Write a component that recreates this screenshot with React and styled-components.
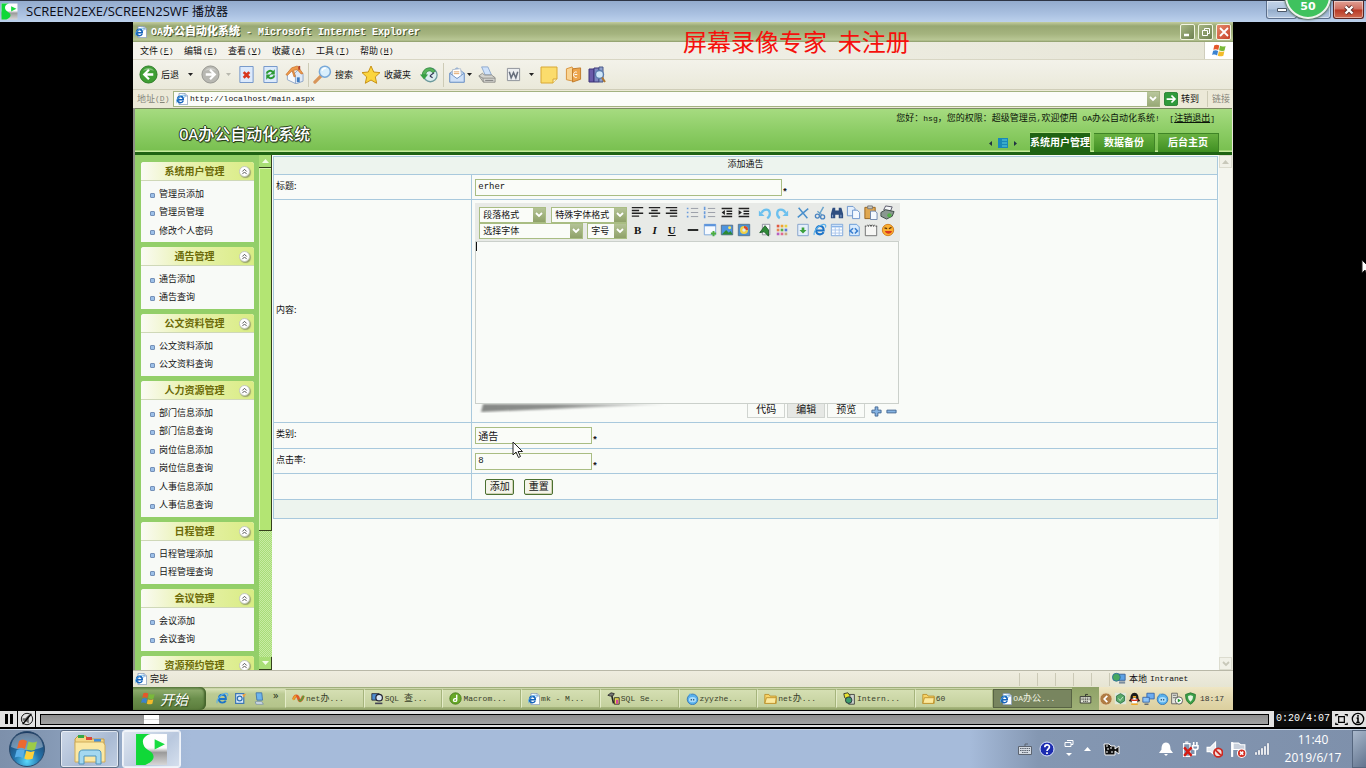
import React from "react";
import styled, { createGlobalStyle, css } from "styled-components";

const cjk = '"Noto Sans CJK SC", sans-serif';
const mono = `"Liberation Mono", ${cjk}`;
const ui = `"Open Sans", ${cjk}`;

const Global = createGlobalStyle`
  *, *::before, *::after { box-sizing: border-box; }
  body { margin: 0; background: #000; font-family: ${cjk}; }
  button, input, select, textarea { font: inherit; color: inherit; margin: 0; padding: 0; border: 0; background: none; border-radius: 0; outline: none; }
  svg { display: block; flex: none; }
`;

/* ---------- player shell ---------- */

const Page = styled.div`
  position: relative;
  display: flex;
  flex-direction: column;
  height: 100vh;
  min-height: 480px;
  overflow: hidden;
`;

const PlayerTitle = styled.header`
  display: flex;
  align-items: center;
  gap: 8px;
  flex: none;
  height: 22px;
  padding: 0 2px 0 1px;
  border-top: 1px solid #2d3444;
  background: linear-gradient(#93abcd, #a9c0e0 60%, #bcd1ec);
  font: 13px/20px ${ui};
  color: #0a0a14;
`;

const PlayerName = styled.span`
  font-size: 12px;
`;

const CaptionButtons = styled.div`
  display: flex;
  gap: 2px;
  align-self: flex-start;
  margin-left: auto;
`;

const CaptionPair = styled.div`
  display: flex;
`;

const Caption = styled.button`
  display: flex;
  align-items: center;
  justify-content: center;
  width: ${(p) => (p.$wide ? "34px" : "31px")};
  height: 18px;
  border: 1px solid ${(p) => (p.$close ? "#5a2420" : "#5c6f8c")};
  border-top: 0;
  border-radius: 0 0 3px 3px;
  background: ${(p) =>
    p.$close
      ? "linear-gradient(#e0a094, #cf6f60 48%, #b83824 52%, #cf6a50)"
      : "linear-gradient(#c3d3e8, #b0c4de 48%, #93abc9 52%, #b4c8e2)"};
  box-shadow: inset 0 0 0 1px rgba(255, 255, 255, 0.45);
`;

const Bubble = styled.button`
  position: absolute;
  z-index: 5;
  top: -27px;
  right: 35px;
  width: 46px;
  height: 46px;
  padding-top: 22px;
  border: 2px solid #eef3ee;
  border-radius: 50%;
  background: #3fc25e;
  box-shadow: 0 0 2px 1px #58705f;
  color: #fff;
  font: bold 11px/18px "DejaVu Sans", sans-serif;
`;

const Stage = styled.div`
  display: flex;
  flex: 1;
  min-height: 0;
  padding: 0 133px;
  background: #000;
`;

const Desktop = styled.div`
  position: relative;
  display: flex;
  flex-direction: column;
  flex: 1;
  min-width: 0;
  background: #ece9d8;
`;

const Watermark = styled.div`
  position: absolute;
  z-index: 3;
  top: 4px;
  left: 50%;
  color: #f5100c;
  font: 24px/30px ${cjk};
  white-space: pre;
`;

/* ---------- browser chrome ---------- */

const BrowserTitle = styled.div`
  display: flex;
  align-items: center;
  gap: 4px;
  flex: none;
  height: 20px;
  padding: 0 2px 0 2px;
  background: linear-gradient(#c3cd9f, #98a873 20%, #a5b47f 60%, #b9c795 90%, #8a9a68);
  color: #fff;
  font: bold 10px/18px ${mono};
  text-shadow: 1px 1px 0 #4c5730;
  white-space: pre;
  b { font-size: 11px; }
`;

const XpButtons = styled.div`
  display: flex;
  gap: 3px;
  margin-left: auto;
`;

const XpButton = styled.button`
  display: flex;
  align-items: center;
  justify-content: center;
  width: 15px;
  height: 16px;
  border: 1px solid #f2f4e2;
  border-radius: 2px;
  background: ${(p) =>
    p.$close ? "linear-gradient(135deg, #e58a6a, #c8432a)" : "linear-gradient(135deg, #a6b583, #6f8150)"};
`;

const MenuBar = styled.nav`
  display: flex;
  flex: none;
  height: 18px;
  padding-left: 7px;
  border-bottom: 1px solid #d8d6c4;
  background: linear-gradient(90deg, #f4f3ec, #f0efe6 50%, #e6e5d6);
`;

const MenuItem = styled.button`
  display: flex;
  align-items: center;
  gap: 1px;
  width: 44px;
  font: 9px/16px ${cjk};
  color: #111;
`;

const Latin = styled.span`
  font: 8px/12px ${mono};
`;

const FlagCell = styled.div`
  display: flex;
  align-items: center;
  justify-content: center;
  width: 29px;
  margin-left: auto;
  border-left: 1px solid #cfcdbc;
  background: #fff;
`;

const Toolbar = styled.div`
  display: flex;
  align-items: center;
  flex: none;
  height: 30px;
  padding-left: 6px;
  border-bottom: 1px solid #cfcdb8;
  background: linear-gradient(#f3f2ea, #eae9da);
`;

const Tool = styled.button`
  display: flex;
  align-items: center;
  gap: 3px;
  margin-right: ${(p) => p.$after || 0}px;
  font: 9px/16px ${cjk};
  color: #111;
  white-space: nowrap;
`;

const Divider = styled.span`
  width: 1px;
  height: 24px;
  margin-right: 4px;
  background: #cdcbb6;
`;

const AddressBar = styled.div`
  display: flex;
  align-items: center;
  flex: none;
  height: 18px;
  padding-left: 4px;
  background: #ece9d8;
  font: 9px/16px ${cjk};
  color: #111;
`;

const AddressLabel = styled.label`
  display: flex;
  align-items: center;
  width: 36px;
  color: #85857a;
`;

const AddressField = styled.div`
  display: flex;
  align-items: center;
  gap: 2px;
  flex: 1;
  height: 16px;
  padding-left: 2px;
  border: 1px solid #a3b281;
  background: #fbfcf9;
`;

const AddressInput = styled.input`
  flex: 1;
  min-width: 0;
  font: 8px/14px ${mono};
`;

const DropButton = styled.button`
  display: flex;
  align-items: center;
  justify-content: center;
  width: 12px;
  height: 14px;
  background: linear-gradient(#b9c79c, #98a976);
`;

const GoButton = styled.button`
  display: flex;
  align-items: center;
  gap: 3px;
  margin: 0 8px 0 4px;
`;

const LinksLabel = styled.a`
  padding: 0 3px 0 4px;
  border-left: 1px solid #cdcbb6;
  color: #85857a;
  text-decoration: none;
`;

/* ---------- application header ---------- */

const AppFrame = styled.div`
  display: flex;
  flex-direction: column;
  flex: 1;
  min-height: 0;
  border-left: 2px solid #8d8f86;
  border-right: 1px solid #e8e6d8;
`;

const AppHeader = styled.header`
  display: flex;
  justify-content: space-between;
  flex: none;
  height: 47px;
  padding: 0 13px 0 44px;
  border-top: 1px solid #7c8a64;
  border-bottom: 3px solid #1f6313;
  background: linear-gradient(#a6db80, #8dcd66 50%, #79c050 96%, #c5ea9c 97%);
`;

const Brand = styled.h1`
  margin: 15px 0 0;
  color: #fff;
  font: 500 16px/24px ${mono};
  text-shadow: 1px 0 0 #28401c, -1px 0 0 #28401c, 0 1px 0 #28401c, 0 -1px 0 #28401c, 1px 1px 1px #28401c;
  white-space: nowrap;
`;

const HeaderRight = styled.div`
  display: flex;
  flex-direction: column;
  align-items: flex-end;
  justify-content: space-between;
`;

const Greeting = styled.div`
  margin: 2px 4px 0 0;
  font: 9px/14px ${cjk};
  color: #0c140a;
  white-space: pre;
  a { color: inherit; }
`;

const Tabs = styled.nav`
  display: flex;
  align-items: flex-end;
  gap: 3px;
`;

const Pager = styled.div`
  display: flex;
  align-items: center;
  gap: 6px;
  margin-right: 10px;
  padding-bottom: 4px;
`;

const Tab = styled.button`
  width: 61px;
  height: ${(p) => (p.$active ? 20 : 19)}px;
  padding-bottom: 2px;
  border: solid ${(p) => (p.$active ? "#a9dc7c" : "#3f8426")};
  border-width: 1px 1px 0 0;
  background: ${(p) => (p.$active ? "#1f6313" : "linear-gradient(#68b040, #3f8f22)")};
  color: #fff;
  font: bold 10px/16px ${cjk};
  white-space: nowrap;
`;

const Body = styled.div`
  display: flex;
  flex: 1;
  min-height: 0;
`;

/* ---------- side menu ---------- */

const Side = styled.aside`
  display: flex;
  flex: none;
  width: 137px;
  background: #93cf69;
`;

const SideMenu = styled.nav`
  display: flex;
  flex-direction: column;
  gap: 5px;
  width: 124px;
  padding: 7px 5px 0 6px;
  overflow: hidden;
`;

const Group = styled.section`
  flex: none;
  border-radius: 3px 3px 0 0;
  background: #f8faf7;
`;

const GroupHead = styled.h2`
  display: flex;
  align-items: center;
  height: 19px;
  margin: 0;
  padding: 0 4px 0 9px;
  border-bottom: 1px solid #cfd8b8;
  border-radius: 3px 3px 0 0;
  background: linear-gradient(90deg, #fafbf4, #e9f2b0 40%, #d9ec84);
  color: #6b6a08;
  font: bold 10px/16px ${cjk};
  span { flex: 1; padding-bottom: 1px; text-align: center; white-space: nowrap; }
`;

const Toggle = styled.button`
  display: flex;
  align-items: center;
  justify-content: center;
  width: 11px;
  height: 11px;
  border: 1px solid #c4c9bd;
  border-radius: 50%;
  background: #fff;
  box-shadow: 1px 1px 1px #9aa56e;
`;

const GroupList = styled.ul`
  margin: 0;
  padding: 4px 0 2px 9px;
  list-style: none;
  li { height: 18px; }
  li:nth-child(even) { margin-bottom: 1px; }
`;

const MenuLink = styled.a`
  display: flex;
  align-items: center;
  gap: 4px;
  color: #141414;
  font: 9px/18px ${cjk};
  text-decoration: none;
  &::before {
    content: "";
    width: 5px;
    height: 5px;
    margin-top: 3px;
    border: 1px solid #7490b8;
    border-radius: 1px;
    background: #9cc0e8;
  }
`;

const Scroll = styled.div`
  display: flex;
  flex-direction: column;
  flex: none;
  width: 13px;
  background: ${(p) =>
    p.$green ? "repeating-conic-gradient(#a8dc78 0 25%, #c8eca4 0 50%) 0 0 / 2px 2px" : "#f4f5ee"};
`;

const ScrollEnd = styled.button`
  display: flex;
  align-items: center;
  justify-content: center;
  height: 13px;
  flex: none;
  border: solid ${(p) => (p.$green ? "#34401c" : "#dcdccf")};
  border-width: ${(p) => (p.$green ? "0 1px 1px 0" : "1px")};
  background: ${(p) => (p.$green ? "#a9de76" : "#f1f1e8")};
`;

const ScrollThumb = styled.div`
  flex: 362;
  border: solid #34401c;
  border-width: 0 1px 1px 0;
  background: #b3e573;
  box-shadow: inset 1px 1px 0 #d8f4b0;
`;

const ScrollRest = styled.div`
  flex: ${(p) => p.$grow || 1};
`;

/* ---------- form ---------- */

const Main = styled.main`
  flex: 1;
  min-width: 0;
  padding: 1px 1px 0 1px;
  overflow: auto;
  background: #f9fbf8;
`;

const FormTable = styled.table`
  width: 100%;
  border-collapse: collapse;
  font: 9px/14px ${cjk};
  color: #141414;
`;

const cell = css`
  padding: 0 3px;
  border: 1px solid #a9c9dd;
  font-weight: normal;
`;

const Banner = styled.th`
  ${cell}
  height: ${(p) => p.$h}px;
  padding-bottom: 3px;
  background: #edf4ee;
  text-align: center;
`;

const LabelCell = styled.th`
  ${cell}
  width: 21%;
  height: ${(p) => p.$h || 25}px;
  padding: 0 2px 3px;
  text-align: left;
`;

const FieldCell = styled.td`
  ${cell}
  vertical-align: ${(p) => (p.$top ? "top" : "middle")};
  padding-top: ${(p) => (p.$top ? 3 : 0)}px;
`;

const FieldLine = styled.div`
  display: flex;
  align-items: flex-end;
  height: 17px;
`;

const Required = styled.span`
  font: bold 9px/6px ${mono};
`;

const TextInput = styled.input`
  width: ${(p) => p.$w}px;
  height: 17px;
  padding: 0 2px 1px;
  border: 1px solid #a9bd83;
  background: #fafcf8;
  font: ${(p) => p.$size || 9}px/14px ${(p) => (p.$sans ? cjk : mono)};
`;

const Actions = styled.div`
  display: flex;
  gap: 10px;
  padding-left: 10px;
`;

const FormButton = styled.button`
  width: 29px;
  height: 16px;
  padding-bottom: 2px;
  border: 1px solid #4b7030;
  border-radius: 2px;
  background: #f4f4ea;
  box-shadow: inset -1px -1px 0 #d0d2b4;
  font: 10px/12px ${cjk};
  white-space: nowrap;
`;

const Editor = styled.div`
  width: 425px;
`;

const EditorBar = styled.div`
  display: flex;
  gap: 1px;
  height: 38px;
  padding: 1px 2px 0 4px;
  background: #e8eae7;
`;

const Selects = styled.div`
  display: flex;
  flex-direction: column;
  width: 149px;
  padding-top: 3px;
`;

const SelectRow = styled.div`
  display: flex;
  justify-content: space-between;
  width: 148px;
`;

const SelectBox = styled.div`
  position: relative;
  width: ${(p) => p.$w}px;
  height: 16px;
  border: 1px solid #a9bd83;
  background: #fafcf8;
`;

const Select = styled.select`
  appearance: none;
  display: block;
  width: 100%;
  height: 14px;
  padding-left: 3px;
  font: 9px/14px ${cjk};
`;

const SelectArrow = styled.span`
  position: absolute;
  top: 0;
  right: 0;
  display: flex;
  align-items: center;
  justify-content: center;
  width: 12px;
  height: 14px;
  background: linear-gradient(#b4c396, #8fa169);
  pointer-events: none;
`;

const IconRows = styled.div`
  display: flex;
  flex-direction: column;
`;

const IconRow = styled.div`
  display: flex;
  gap: 4px;
`;

const IconGroup = styled.div`
  display: flex;
`;

const EditTool = styled.button`
  display: flex;
  align-items: center;
  justify-content: center;
  width: 17px;
  height: 17px;
  color: #111;
`;

const Glyph = styled.span`
  font: ${(p) => (p.$slant ? "italic" : "normal")} bold 11px/16px "Liberation Serif", serif;
  text-decoration: ${(p) => (p.$line ? "underline" : "none")};
`;

const EditArea = styled.textarea`
  display: block;
  width: 424px;
  height: 163px;
  padding: 0 2px;
  border: 1px solid #cbd0cb;
  background: #f9fbf8;
  font: 9px/12px ${mono};
  resize: none;
`;

const AreaWrap = styled.div`
  position: relative;
`;

const Caret = styled.span`
  position: absolute;
  top: 1px;
  left: 1px;
  width: 1px;
  height: 9px;
  background: #111;
`;

const EditorFoot = styled.div`
  display: flex;
  height: 14px;
  padding: 0 3px 0 3px;
`;

const ViewTabs = styled.div`
  display: flex;
  gap: 2px;
  margin: 0 6px 0 auto;
`;

const ViewTab = styled.button`
  width: 38px;
  height: 14px;
  padding-bottom: 3px;
  border: solid #d0d4d0;
  border-width: 0 1px 1px;
  background: ${(p) => (p.$active ? "#e6e8e5" : "#f9fbf8")};
  font: 10px/10px ${cjk};
`;

const ZoomButtons = styled.div`
  display: flex;
  align-items: center;
  gap: 4px;
`;

const Pointer = styled.div`
  position: absolute;
  z-index: 4;
  top: ${(p) => p.$y}px;
  left: ${(p) => p.$x}px;
`;

/* ---------- status bar and XP task bar ---------- */

const StatusBar = styled.footer`
  display: flex;
  align-items: center;
  gap: 3px;
  flex: none;
  height: 17px;
  padding-left: 2px;
  border-top: 1px solid #b9b8a8;
  background: linear-gradient(#eeecdf, #e6e5d3);
  font: 9px/14px ${cjk};
  color: #111;
`;

const Panes = styled.div`
  display: flex;
  margin-left: auto;
`;

const Pane = styled.span`
  display: flex;
  align-items: center;
  gap: 3px;
  width: ${(p) => p.$w || 18}px;
  height: 13px;
  padding-left: 2px;
  border-left: 1px solid #cbc9b6;
  white-space: pre;
`;

const XpBar = styled.div`
  display: flex;
  flex: none;
  height: 23px;
  background: linear-gradient(#8a9c66, #d9e2b8 8%, #bccb94 30%, #b4c48b 85%, #8b9c62);
`;

const StartXp = styled.button`
  display: flex;
  align-items: center;
  gap: 4px;
  width: 73px;
  padding-left: 8px;
  border-radius: 0 6px 6px 0;
  background: linear-gradient(#5d7f41, #8aa869 15%, #6b8f4c 50%, #5b7c3c);
  box-shadow: inset -2px 0 2px #45642c;
  color: #fff;
  font: italic 14px/20px ${cjk};
  text-shadow: 1px 1px 1px #2f4a1d;
`;

const QuickLaunch = styled.div`
  display: flex;
  align-items: center;
  gap: 5px;
  width: 79px;
  padding-left: 10px;
  color: #2a3018;
  font: 11px/12px ${ui};
  span { padding: 0 0 8px 3px; }
`;

const Tasks = styled.div`
  display: flex;
  flex: 1;
  min-width: 0;
`;

const Task = styled.button`
  display: flex;
  align-items: center;
  gap: 1px;
  flex: 1;
  min-width: 0;
  margin: 2px 0;
  padding-left: 6px;
  border: 1px solid ${(p) => (p.$active ? "#586344" : "#a5b47c")};
  border-left-color: ${(p) => (p.$active ? "#586344" : "#e4ecc8")};
  background: ${(p) => (p.$active ? "#78855f" : "linear-gradient(#d5dfb3, #c3d09c)")};
  color: ${(p) => (p.$active ? "#f2f4e4" : "#39412a")};
  font: 8px/14px ${mono};
  white-space: pre;
  overflow: hidden;
  b { font: 9px/14px ${cjk}; }
`;

const Lang = styled.div`
  display: flex;
  align-items: center;
  justify-content: center;
  width: 27px;
  background: linear-gradient(#8fa267, #9fb077);
`;

const TrayXp = styled.div`
  display: flex;
  align-items: center;
  gap: 1px;
  width: 134px;
  background: linear-gradient(#efe6c4, #e2d8ae 50%, #dccf9e);
  color: #333;
`;

const ClockXp = styled.span`
  margin-left: 2px;
  font: 8px/14px ${mono};
`;

/* ---------- player controls ---------- */

const Controls = styled.div`
  display: flex;
  align-items: center;
  gap: 1px;
  flex: none;
  height: 19px;
  padding: 0 0 0 1px;
  border: solid #000;
  border-width: 1px 0 2px;
  background: #e2e2e2;
`;

const ControlButton = styled.button`
  display: flex;
  align-items: center;
  justify-content: center;
  width: ${(p) => (p.$edge ? 17 : 16)}px;
  height: 16px;
  border-right: ${(p) => (p.$edge ? "1px solid #000" : "0")};
`;

const Seek = styled.input`
  appearance: none;
  flex: 1;
  min-width: 0;
  height: 11px;
  margin: 0 4px 0 3px;
  border: 1px solid #000;
  background: linear-gradient(#8c8c8c, #a2a2a2);
  &::-webkit-slider-thumb {
    appearance: none;
    width: 15px;
    height: 9px;
    border: 0;
    background: linear-gradient(#fff 40%, #ddd 40%, #ddd 60%, #fff 60%);
  }
`;

const TimeBox = styled.output`
  width: 58px;
  height: 16px;
  background: #0c0c0c;
  color: #fff;
  font: 10px/16px ${mono};
  text-align: center;
`;

/* ---------- Windows 7 task bar ---------- */

const WinBar = styled.footer`
  display: flex;
  align-items: center;
  flex: none;
  height: 39px;
  border-top: 1px solid #c8d5e6;
  background: linear-gradient(90deg, #7d90ab, #8397b2 3%, #a6bbda 14%, #a6bbda 71%, #8497b2 76%, #7e90ab);
`;

const Orb = styled.button`
  padding: 0 14px 0 8px;
`;

const PinButton = styled.button`
  display: flex;
  align-items: center;
  justify-content: center;
  width: 59px;
  height: 38px;
  margin-right: 3px;
  border: 1px solid ${(p) => (p.$active ? "#f0f4fa" : "#5f7088")};
  border-radius: 3px;
  background: ${(p) =>
    p.$active
      ? "linear-gradient(135deg, #dfe6f0, #b9c8de 60%, #d6e0ee)"
      : "linear-gradient(135deg, #cdd8e8, #a9bad3 60%, #c0cee2)"};
  box-shadow: inset 0 0 0 1px rgba(255, 255, 255, 0.6);
`;

const TrayWin = styled.div`
  display: flex;
  align-items: center;
  margin-left: auto;
`;

const TrayIcon = styled.button`
  display: flex;
  align-items: center;
  justify-content: center;
  width: ${(p) => p.$w || 24}px;
  height: 24px;
  margin-left: ${(p) => p.$before || 0}px;
`;

const ClockWin = styled.time`
  width: 78px;
  color: #fff;
  font: 12px/18px ${ui};
  text-align: center;
`;

const ShowDesktop = styled.button`
  width: 14px;
  height: 38px;
  border: 1px solid #55667e;
  border-right: 0;
  background: linear-gradient(135deg, #a9b8cc, #62748e);
`;

/* ---------- drawings ---------- */

const Svg = ({ w = 14, h, box = "0 0 16 16", children }) => (
  <svg width={w} height={h || w} viewBox={box} fill="none" aria-hidden="true">
    {children}
  </svg>
);

const LetterE = ({ c = "#1d74c8" }) => (
  <g>
    <path d="M3.6 8.6h8.6C12.2 5 10.400 3.400 8 3.400S3.500 5.300 3.500 8.400 5.500 13 8 13c1.900 0 3.300-.9 4-2.500" stroke={c} strokeWidth="2.300" />
    <path d="M1.500 13.800C-.2 10 6 2.500 11.500 1.600c3-.4 3.600 1.400 2.700 3.600" stroke="#5bb0ea" strokeWidth="1.300" />
  </g>
);
const IconIE = ({ w = 13 }) => <Svg w={w}><LetterE /></Svg>;
const IconPageE = ({ w = 12 }) => (
  <Svg w={w}>
    <path d="M4 .5h8l3.500 3.500v11.500H4z" fill="#fff" stroke="#7c93b5" />
    <path d="M12 .5V4h3.500" fill="#cfe0f4" stroke="#7c93b5" />
    <g transform="translate(-1 1.500) scale(.88)"><LetterE c="#1664bc" /></g>
  </Svg>
);
const IconFlag = ({ w = 16 }) => (
  <Svg w={w}>
    <path d="M2.500 2.500c2-1 3.600-.7 5.300.2L6.700 7.500C5 6.600 3.400 6.500 1.400 7.300z" fill="#e4572a" />
    <path d="M8.600 3c1.900.9 3.600 1 5.900.1l-1.100 4.800c-2.200.9-3.900.8-5.900-.1z" fill="#79b93a" />
    <path d="M1.200 8.200c2-.8 3.600-.7 5.300.2l-1.100 4.800c-1.700-.9-3.300-1.100-5.300-.3z" fill="#3b82d0" />
    <path d="M7.300 8.700c1.900.9 3.700 1 5.900.1l-1.100 4.800c-2.200.9-4 .8-5.900-.1z" fill="#f3bb2b" />
  </Svg>
);
const IconPlayer = ({ w = 17 }) => (
  <Svg w={w} box="0 0 32 32">
    <defs>
      <linearGradient id="sheet" x1="0" y1="0" x2="0" y2="1">
        <stop offset="0" stopColor="#fff" /><stop offset=".45" stopColor="#fbfbfb" /><stop offset=".6" stopColor="#9a9a9a" /><stop offset="1" stopColor="#d6d6d6" />
      </linearGradient>
    </defs>
    <path d="M1 1h30v30H1z" fill="url(#sheet)" />
    <path d="M1 1h14C8 3 6 8 9 13c3 4 9 5 9 10 0 4-4 6-8 8H1z" fill="#10d838" />
    <path d="M19 6v10l10-5z" fill="#18dc40" />
  </Svg>
);
const Caret6 = ({ c = "#222" }) => <Svg w={5} h={3} box="0 0 5 3"><path d="M0 0h5L2.500 3z" fill={c} /></Svg>;
const Chevron = ({ c = "#fff" }) => <Svg w={8} h={6} box="0 0 8 6"><path d="M1 1l3 3 3-3" stroke={c} strokeWidth="1.800" /></Svg>;
const RoundArrow = ({ fill, edge, back }) => (
  <Svg w={19} box="0 0 20 20">
    <circle cx="10" cy="10" r="9" fill={fill} stroke={edge} />
    <path d="M4 6a7 6 0 0 1 12 0c-3-1-9-1-12 0z" fill="#fff" opacity=".35" />
    <path d={back ? "M10.500 5L5.500 10l5 5M6 10h9" : "M9.500 5l5 5-5 5M14 10H5"} stroke="#fff" strokeWidth="2.400" />
  </Svg>
);
const IconStop = () => (
  <Svg w={17} box="0 0 17 18">
    <path d="M1.500.5h14v17h-14z" fill="#dceafc" stroke="#6f93c8" />
    <path d="M5.500 6.500l6 6m0-6l-6 6" stroke="#d8361c" strokeWidth="2.800" />
  </Svg>
);
const IconRefresh = () => (
  <Svg w={17} box="0 0 17 18">
    <path d="M1.500.5h14v17h-14z" fill="#dceafc" stroke="#6f93c8" />
    <path d="M4.500 8c.5-3 4.500-4 6.500-1.500M12.500 10c-.5 3-4.500 4-6.500 1.500" stroke="#2c9a34" strokeWidth="2.200" />
    <path d="M13 3.500V9H8zM4 14.500V9h5z" fill="#2c9a34" />
  </Svg>
);
const IconHome = () => (
  <Svg w={19} box="0 0 20 20">
    <path d="M9 10l5-5 5 5v7l-8 3z" fill="#dfe9f6" stroke="#8ea6c8" />
    <path d="M2.500 10L7 6l4 5v8.500l-8.500-4z" fill="#f7f9fc" stroke="#8ea6c8" />
    <path d="M1 10l6-7 6-2 6 8-2 .5-4-4.500-4 .5 2 6.500-1.500.5L7.500 6 2.500 11z" fill="#ef9a4c" stroke="#c4702a" strokeWidth=".7" />
    <path d="M14 1h2v4h-2z" fill="#b3402a" /><path d="M12.500 13h3v5h-3z" fill="#3f7cc0" />
  </Svg>
);
const IconSearch = () => (
  <Svg w={19} box="0 0 20 20">
    <path d="M8.500 11.500L2 18" stroke="#d8955a" strokeWidth="3.400" strokeLinecap="round" />
    <circle cx="12.500" cy="7" r="5.800" fill="#d9effc" stroke="#78a8d8" strokeWidth="1.600" />
    <path d="M9.500 6c.6-2 2.200-2.800 4-2.500" stroke="#fff" strokeWidth="1.500" />
  </Svg>
);
const IconStar = () => (
  <Svg w={20} box="0 0 20 20">
    <path d="M10 1l2.700 6 6.300.6-4.700 4.300 1.400 6.400L10 15l-5.700 3.300 1.400-6.400L1 7.600 7.300 7z" fill="#fbd53c" stroke="#c99316" />
  </Svg>
);
const IconHistory = () => (
  <Svg w={18} box="0 0 20 20">
    <circle cx="11.500" cy="10" r="7.500" fill="#dceeee" stroke="#6c9a9c" strokeWidth="1.400" />
    <path d="M2.500 10c0-8 11-11 14.500-4l-3 1.500c-2-3.500-7.500-2.500-7.500 2.500z" fill="#58b45a" stroke="#2f8440" strokeWidth=".8" />
    <path d="M0 9.500h9l-4.500 5.500z" fill="#35a044" />
    <path d="M11 11l4.500-3.500M11 11l3 2" stroke="#335" strokeWidth="1.300" />
  </Svg>
);
const IconMail = () => (
  <Svg w={18} box="0 0 20 20">
    <path d="M2 8l8-6 8 6v10H2z" fill="#bcd6f4" stroke="#6f93c4" />
    <path d="M5 4l9-1 1 8-5 3-5-3z" fill="#fff" stroke="#b0bccc" /><path d="M6.500 6.500h6M6.500 8.500h6" stroke="#e0a060" />
    <path d="M2 8l8 6 8-6v10H2z" fill="#cfe1f8" stroke="#6f93c4" />
  </Svg>
);
const IconPrinter = () => (
  <Svg w={18} box="0 0 20 20">
    <path d="M4 1h7l4 9H8z" fill="#cfe2fa" stroke="#8aa6cc" />
    <path d="M1 11l4-3 2 2h8l4 3v5H6z" fill="#d4d4d0" stroke="#8d8d88" /><path d="M6 18l-.5-4.500L1 11M5.500 13.500H19" stroke="#8d8d88" />
    <path d="M8 16h9" stroke="#777" />
  </Svg>
);
const IconWord = () => (
  <Svg w={15}>
    <path d="M1.500 1.500h13v13h-13z" fill="#eceef0" stroke="#8c9098" />
    <path d="M3.500 5l2 6.500L8 6l2.500 5.500 2-6.500" stroke="#666e7c" strokeWidth="1.600" />
  </Svg>
);
const IconNote = () => (
  <Svg w={18} box="0 0 18 18"><path d="M1 1h16v12l-4 4H1z" fill="#fbdc6c" stroke="#d8a834" /><path d="M17 13h-4v4" fill="#f6f0c8" stroke="#d8a834" /></Svg>
);
const IconBookFold = () => (
  <Svg w={17} box="0 0 18 18"><path d="M1.500 3l6-2 1 2v13l-7-1.500z" fill="#f9d494" stroke="#d8923c" /><path d="M8 3l8.500-1v12L8 17z" fill="#eda54c" stroke="#c07a28" /><path d="M12.500 6.500a2.500 3 0 1 0 0 5.500M10 9h3" stroke="#fff" /></Svg>
);
const IconBooks = () => (
  <Svg w={18} box="0 0 18 18"><path d="M1 3h5v13H1z" fill="#6a5aa8" stroke="#3d3478" /><path d="M6 2h5v14H6z" fill="#7c86c0" stroke="#3d3478" /><path d="M11 1h4v15h-4z" fill="#8ea0cc" stroke="#4a5888" /><circle cx="11.500" cy="8.500" r="4" fill="#cfe6f8" stroke="#5a7cac" strokeWidth="1.400" /><path d="M14 11.500l3 4.500" stroke="#b07830" strokeWidth="2" /></Svg>
);
const IconGo = () => (
  <Svg w={14}><rect x=".5" y=".5" width="15" height="15" rx="2" fill="#2f9a3c" stroke="#1f7a2c" /><path d="M3 8h9M8.500 4l4 4-4 4" stroke="#fff" strokeWidth="2" /></Svg>
);

const Lines = ({ d }) => <Svg w={13}><path d={d} stroke="#222" strokeWidth="1.700" /></Svg>;
const ListIcon = ({ dots }) => (
  <Svg w={13}><path d="M6 3h9M6 8h9M6 13h9" stroke="#9a9ea8" strokeWidth="1.200" /><path d={dots} stroke="#6a9cdc" strokeWidth="2" /></Svg>
);
const Indent = ({ tri }) => (
  <Svg w={13}><path d="M2 3h13M8 6.500h7M8 9.500h7M2 13h13" stroke="#222" strokeWidth="1.700" /><path d={tri} fill="#222" /></Svg>
);
const Curl = ({ flip }) => (
  <Svg w={14}><g transform={flip ? "translate(16 0) scale(-1 1)" : undefined}><path d="M4 8c2-5 9-5 9.500 0 .3 3-1.500 5-3 6" stroke="#6cc0ee" strokeWidth="2.600" /><path d="M1 5v6.500h6.500z" fill="#6cc0ee" /></g></Svg>
);
const IconX = () => <Svg><path d="M3 2l10 12M14 3L2 13" stroke="#4a90cc" strokeWidth="1.700" /></Svg>;
const IconCut = () => <Svg><path d="M12 1L7 10M5 6l5 4" stroke="#6aa4cc" strokeWidth="1.700" /><circle cx="5" cy="11.500" r="2.300" stroke="#4a84c0" strokeWidth="1.500" /><circle cx="11" cy="12.500" r="2.300" stroke="#4a84c0" strokeWidth="1.500" /></Svg>;
const IconFind = () => <Svg><path d="M3 2h3v3h4V2h3l2 7v5h-5v-4H6v4H1V9z" fill="#2f4e80" /><path d="M3 10v3M12.500 10v3" stroke="#9cb8e0" /></Svg>;
const IconCopy = () => <Svg w={15}><path d="M1.500 1.500h6l2 2v8h-8z" fill="#e4effc" stroke="#6c94cc" /><path d="M7 5.500h5l2.500 2.500v6.500H7z" fill="#f4f9ff" stroke="#6c94cc" /></Svg>;
const IconPaste = () => <Svg w={15}><path d="M2 2.500h11v12H2z" fill="#e0a850" stroke="#966420" /><path d="M5 1h5v3H5z" fill="#c8c8c0" stroke="#777" /><path d="M8 6.500h5l2 2v7H8z" fill="#f4f9ff" stroke="#6c84ac" /></Svg>;
const IconPrint2 = () => <Svg w={15}><path d="M6 1l7 1-2 5-7-2z" fill="#f4f6f8" stroke="#556" /><path d="M1 8l5-3 9 2-2 5-6 3-6-3z" fill="#8a9890" stroke="#3c4844" /><circle cx="10" cy="11" r="2.300" fill="#54b048" /></Svg>;
const IconRule = () => <Svg><path d="M2 8h12" stroke="#111" strokeWidth="2" /></Svg>;
const IconWindow = () => <Svg><path d="M1.500 1.500h13v12h-13z" fill="#f6faff" stroke="#74a0d8" /><path d="M1.500 2.500h13" stroke="#5c94dc" strokeWidth="2.500" /><path d="M12 9v6M9 12h6" stroke="#4cae40" strokeWidth="2.200" /></Svg>;
const IconImage = () => <Svg><path d="M1.500 2.500h13v11h-13z" fill="#4c94e0" stroke="#556c84" /><path d="M2 13l5-5 3 3 2-2 2.500 4z" fill="#2c8a34" /><circle cx="11" cy="5.500" r="1.700" fill="#fbe45c" /></Svg>;
const IconFlash = () => <Svg><path d="M1.500 1.500h13v13h-13z" fill="#4a90d0" stroke="#54708c" /><circle cx="8" cy="8" r="4.600" fill="#f0d048" /><path d="M8 3.400A4.600 4.600 0 0 1 12.600 8H8z" fill="#d8452c" /><circle cx="8" cy="8" r="2" fill="#dfeaf4" /></Svg>;
const IconFile = () => <Svg><path d="M5 1.500h8.500v12H5z" fill="#f6f8fa" stroke="#889" /><path d="M8 3L2 11l5-1 5 5V8z" fill="#2f8a38" stroke="#1f5c28" /></Svg>;
const IconPalette = () => (
  <Svg>
    {["#e05840", "#f0a030", "#e8d040", "#e88850", "#58b048", "#5878d8", "#b860c0", "#e06890", "#c8a880"].map((c, i) => (
      <rect key={c} x={2 + (i % 3) * 4.500} y={2 + Math.floor(i / 3) * 4.500} width="3" height="3" fill={c} />
    ))}
  </Svg>
);
const IconDown = () => <Svg><path d="M2 1.500h12v13H2z" fill="#e4effa" stroke="#7c9cc8" /><path d="M8 12L4 8h2.500V5h3v3H12z" fill="#3ca03c" /></Svg>;
const IconGrid = () => <Svg><path d="M1.500 1.500h13v13h-13z" fill="#fafdff" stroke="#74a0d8" /><path d="M2 4h12" stroke="#8ab4e8" strokeWidth="2" /><path d="M2 8h12M2 11.500h12M6 5v9M10.500 5v9" stroke="#a8c4ec" /></Svg>;
const IconCode = () => <Svg><path d="M3 1.500h8l3 3v10H3z" fill="#d8eafc" stroke="#5c94d4" /><path d="M7 6L3.500 9 7 12M9 6l3 3-3 3" stroke="#3c80d0" strokeWidth="1.800" /></Svg>;
const IconFieldset = () => <Svg><path d="M1.500 3.500v11h13v-11" fill="#f6f6f4" stroke="#666" /><path d="M1 3.500h2M13 3.500h2M4 2l1 2 1-2M7 2l1 2 1-2M10 2l1 2 1-2" stroke="#444" /></Svg>;
const IconSmile = () => <Svg><circle cx="8" cy="8" r="6.500" fill="#fbb030" stroke="#d07818" /><path d="M4 5.500l3 1M12 5l-3 1.500" stroke="#5c3408" strokeWidth="1.400" /><path d="M4.500 9h8c-.5 4-7 4.500-8 0z" fill="#d83820" /></Svg>;
const IconPlusMinus = ({ plus }) => (
  <Svg w={11} box="0 0 12 12"><path d={plus ? "M4.500 1h3v3.500H11v3H7.500V11h-3V7.500H1v-3h3.500z" : "M1 4.500h10v3H1z"} fill="#86b4e4" stroke="#41658f" /></Svg>
);

const IconFolder = () => <Svg w={13}><path d="M1 3h5l1.500 2H15v9H1z" fill="#f8d468" stroke="#b88a24" /><path d="M3 7h12l-1 7H1z" fill="#fce99c" stroke="#b88a24" /></Svg>;
const IconBrush = () => <Svg w={13}><path d="M2 9c1.500-6 5-5 6-1s3.500 4 6-3" stroke="#e05a28" strokeWidth="3.500" /><path d="M8.500 9.500c1.500 3 3.500 1 6-5" stroke="#5c9c38" strokeWidth="2" /><path d="M1.500 10c1-4 2-5 3.500-5" stroke="#e8a828" strokeWidth="2" /></Svg>;
const IconSql = () => <Svg w={13}><path d="M1 2h9v8H1z" fill="#4c8cd0" stroke="#223" /><circle cx="10" cy="7" r="4" fill="#dce8f4" stroke="#223" strokeWidth="1.500" /><path d="M5 13h9v2H5z" fill="#445" /></Svg>;
const IconDw = () => <Svg w={13}><circle cx="8" cy="8" r="7" fill="#68a828" stroke="#44761a" /><path d="M9.500 3.500V10c0 2-4 2-4 0s3-2 4-1.500" stroke="#fff" strokeWidth="1.700" /></Svg>;
const IconHammer = () => <Svg w={13}><path d="M1 4l4-3 4 1-2 3H4z" fill="#777" stroke="#222" /><path d="M6 5l2 9" stroke="#222" strokeWidth="2" /><path d="M9 7h6v8H9z" fill="#e8e048" stroke="#222" /><path d="M11 9.500h3v5h-3z" fill="#d048a0" /></Svg>;
const IconChat = ({ w = 14 }) => <Svg w={w}><circle cx="8" cy="9" r="6.500" fill="#58b0ec" stroke="#2c70b4" /><ellipse cx="8" cy="9.500" rx="4.500" ry="3.200" fill="#a8dcfc" /><path d="M6.500 8.500v2M9.500 8.500v2" stroke="#246" strokeWidth="1.300" /><path d="M3 4l2-2.500L7 4" fill="#58b0ec" /></Svg>;
const IconServer = () => <Svg w={13}><path d="M7 3h7v12H7z" fill="#ccd2cc" stroke="#333" /><path d="M1 2l5-1 3 4-4 4-3-2z" fill="#e8e430" stroke="#222" /><circle cx="7" cy="10" r="4" fill="#3c9c6c" stroke="#223" /></Svg>;
const IconDesk = () => <Svg w={13}><path d="M5 1h7l1 9H6z" fill="#6cb4ec" stroke="#3c70a8" /><path d="M4 12h8l2 3H5z" fill="#dce6f0" stroke="#7890a8" /></Svg>;
const IconOutlook = () => <Svg w={13}><path d="M2 2h10v12H2z" fill="#dcecfa" stroke="#3f78b4" strokeWidth="1.500" /><circle cx="7" cy="8" r="3" stroke="#2f70b4" strokeWidth="1.500" /><path d="M10 3l5-1-3 5" fill="#f0a040" /></Svg>;
const IconNet = () => <Svg w={14}><path d="M6 2.500h9v7H6z" fill="#5ca0e4" stroke="#345c94" /><circle cx="5" cy="6" r="4.500" fill="#48a860" stroke="#2c6ca0" /><path d="M8 12h7" stroke="#7c8c9c" strokeWidth="2.500" /></Svg>;
const IconKeyboard = ({ c = "#222", fill = "#e8ecdc", w = 14 }) => <Svg w={w}><path d="M1.500 5.500h13v8h-13z" stroke={c} fill={fill} /><path d="M3 7.500h10M3 9.500h10M5 11.500h6" stroke={c} strokeDasharray="1.500 .7" /><path d="M8 5V3h3" stroke={c} /></Svg>;
const IconHide = () => <Svg w={14}><circle cx="8" cy="8" r="7" fill="#b07c44" stroke="#e8d8b4" /><path d="M9.500 4.500L6 8l3.500 3.500" stroke="#fff" strokeWidth="2" /></Svg>;
const IconGem = () => <Svg w={13}><path d="M1 1h14v14H1z" fill="#dfe8dc" /><path d="M8 2l5 3v6l-5 3-5-3V5z" fill="#58a868" stroke="#2c6c44" /><path d="M5.500 8l2 2.500L11 6" stroke="#d8f0dc" /></Svg>;
const IconPenguin = () => <Svg w={13}><path d="M8 1c4 0 5 4 5 7l2 3-3 1c-2 3-6 3-8 0l-3-1 2-3c0-3 1-7 5-7z" fill="#1c1c1c" /><ellipse cx="8" cy="11" rx="3.500" ry="3.500" fill="#fff" /><path d="M3.500 8c3 2 6 2 9 0v2c-3 1.500-6 1.500-9 0z" fill="#d8301c" /><path d="M4 15h8M6 6h4" stroke="#f0a828" strokeWidth="2" /></Svg>;
const IconMonitors = () => <Svg w={13}><path d="M6 1.500h9v7H6z" fill="#6cacf0" stroke="#2c5ca4" /><path d="M1 6.500h8v6H1z" fill="#8cc4f8" stroke="#2c5ca4" /><path d="M3 15h5" stroke="#456" strokeWidth="1.500" /></Svg>;
const IconService = () => <Svg w={13}><path d="M2 1.500h7v13H2z" fill="#e4e4dc" stroke="#555" /><path d="M3.500 4h4M3.500 7h4" stroke="#555" /><circle cx="11" cy="10.500" r="4.500" fill="#fff" stroke="#444" /><path d="M9.500 8v5l4-2.500z" fill="#249a30" /></Svg>;
const IconShield = () => <Svg w={13}><path d="M8 1l6 2c0 6-1 9-6 12C3 12 2 9 2 3z" fill="#3ca048" stroke="#20702c" /><path d="M8 4l3 1c0 4-1 5-3 7-2-2-3-3-3-7z" fill="#e4f4e0" /></Svg>;

const OrbIcon = () => (
  <Svg w={38} box="0 0 38 38">
    <defs>
      <radialGradient id="orb" cx=".5" cy=".85" r=".8">
        <stop offset="0" stopColor="#58d8fc" /><stop offset=".45" stopColor="#2474ac" /><stop offset="1" stopColor="#1c3c64" />
      </radialGradient>
    </defs>
    <circle cx="19" cy="19" r="17.500" fill="url(#orb)" stroke="#2a4a6c" />
    <path d="M3 17C4 7 11 3 19 3s15 4 16 14c-8 4-24 4-32 0z" fill="#fff" opacity=".35" />
    <path d="M11 11c3-2 5-1.500 8 0l-2 8c-3-1.500-5-1.500-8-.3z" fill="#ec6a30" />
    <path d="M20.500 11.500c3 1.400 6 1.400 8.500 0l-2 8c-3 1.400-5.500 1-8.400-.3z" fill="#9ccc48" />
    <path d="M8.700 20c3-1.200 5-1.200 8 .3l-2 7.700c-3-1.500-5-1.600-8-.4z" fill="#58aee8" />
    <path d="M18.300 20.800c3 1.400 5.500 1.400 8.300.3l-2 7.700c-3 1.200-5.500 1-8.300-.4z" fill="#fcd03c" />
  </Svg>
);
const ExplorerIcon = () => (
  <Svg w={34} h={32} box="0 0 34 32">
    <path d="M2 6l3-3h8l2 3h16v22H3z" fill="#f4d888" stroke="#c49c44" />
    <path d="M5 2h6v3H5z" fill="#34a848" /><path d="M13 4h6v3h-6z" fill="#d8483c" /><path d="M21 6h7v3h-7z" fill="#4490dc" />
    <path d="M2 9h28l2 3v17H2z" fill="#fbe8a4" stroke="#d0ac58" />
    <path d="M6 31V21c0-3 2-4 4-4h14c3 0 4 1 4 4v10h-5v-8H11v8z" fill="#a4d8f0" stroke="#4c94bc" />
  </Svg>
);
const HelpIcon = () => <Svg w={16}><circle cx="8" cy="8" r="7" fill="#1c2cb0" stroke="#dce4fc" /><path d="M5.800 6.200c0-3 4.600-3 4.600-.3C10.400 7.800 8 7.800 8 10M8 11.200V13" stroke="#fff" strokeWidth="1.700" /></Svg>;
const RestoreIcon = () => <Svg w={10} h={20} box="0 0 10 20"><path d="M3 1.500h6v4H7M1 3.500h6v4H1z" stroke="#fff" /><path d="M2 14h6l-3 3z" fill="#fff" /></Svg>;
const UpIcon = () => <Svg w={9} h={6} box="0 0 9 6"><path d="M1 5l3.500-4L8 5z" fill="#fff" /></Svg>;
const CameraIcon = () => <Svg w={18} h={13} box="0 0 18 13"><path d="M1 1h5l2 2h4v3l4-3v8l-4-3v4H2z" fill="#111" stroke="#f4f4f4" /><path d="M3 3h2M4 6h2M7 5h2M3 9h2M8 9h2" stroke="#fff" /></Svg>;
const BellIcon = () => <Svg w={16}><path d="M8 1.500c4 0 4.500 4 4.500 7L15 12H1l2.500-3.500c0-3 .5-7 4.500-7zM6 13h4l-2 2z" fill="#fff" /></Svg>;
const PlugIcon = () => <Svg w={17}><path d="M1.500 2.500h6v12h-6zM3 1h3" stroke="#fff" strokeWidth="1.200" /><path d="M10 4.500h5v2c0 2-5 2-5 0zM11 1v3M14 1v3M12.500 8v5H9" stroke="#fff" strokeWidth="1.500" /><path d="M2 6l7 8m0-8l-7 8" stroke="#d41c14" strokeWidth="2.200" /></Svg>;
const SpeakerIcon = () => <Svg w={17}><path d="M1 6h3l5-5v13L4 10H1z" fill="#e8ecf0" stroke="#fff" /><circle cx="11.500" cy="11" r="4" fill="#f4e0dc" stroke="#cc2820" strokeWidth="1.700" /><path d="M9 8.500l5 5" stroke="#cc2820" strokeWidth="1.700" /></Svg>;
const ActionIcon = () => <Svg w={17}><path d="M2 1v14" stroke="#fff" strokeWidth="2" /><path d="M3 2h5l2 1.500h4V9H9L8 8H3z" fill="#c8d0dc" stroke="#fff" /><circle cx="11" cy="11.500" r="4" fill="#d42c20" stroke="#fff" /><path d="M9.500 10l3 3m0-3l-3 3" stroke="#fff" strokeWidth="1.400" /></Svg>;
const SignalIcon = () => <Svg w={16}><path d="M1 11h2v3H1zM4 9h2v5H4zM7 7h2v7H7zM10 5h2v9h-2zM13 2h2v12h-2z" fill="#fff" stroke="#5a6a80" strokeWidth=".3" /></Svg>;
const ArrowCursor = () => <Svg w={12} h={18} box="0 0 12 18"><path d="M1 1v13l3-3 2.500 5.500 2-1L6 10.500h4.500z" fill="#fff" stroke="#222" /></Svg>;
const ArrowTip = ({ d, c }) => <Svg w={7} h={4} box="0 0 7 4"><path d={d} fill={c} /></Svg>;

/* ---------- data ---------- */

const menus = [["文件", "F"], ["编辑", "E"], ["查看", "V"], ["收藏", "A"], ["工具", "T"], ["帮助", "H"]];

const groups = [
  ["系统用户管理", ["管理员添加", "管理员管理", "修改个人密码"]],
  ["通告管理", ["通告添加", "通告查询"]],
  ["公文资料管理", ["公文资料添加", "公文资料查询"]],
  ["人力资源管理", ["部门信息添加", "部门信息查询", "岗位信息添加", "岗位信息查询", "人事信息添加", "人事信息查询"]],
  ["日程管理", ["日程管理添加", "日程管理查询"]],
  ["会议管理", ["会议添加", "会议查询"]],
  ["资源预约管理", []],
];

const iconRows = [
  [
    [<Lines d="M1 2h14M1 5.500h9M1 9h14M1 12.500h9" />, <Lines d="M1 2h14M4 5.500h8M1 9h14M4 12.500h8" />, <Lines d="M1 2h14M6 5.500h9M1 9h14M6 12.500h9" />],
    [<ListIcon dots="M1 3h2M1 8h2M1 13h2" />, <ListIcon dots="M2 1v4M2 6.500v3.500M2 11.500v3.500" />, <Indent tri="M6 5v6L2 8z" />, <Indent tri="M2 5v6l4-3z" />],
    [<Curl />, <Curl flip />],
    [<IconX />, <IconCut />, <IconFind />, <IconCopy />, <IconPaste />, <IconPrint2 />],
  ],
  [
    [<Glyph>B</Glyph>, <Glyph $slant>I</Glyph>, <Glyph $line>U</Glyph>],
    [<IconRule />, <IconWindow />, <IconImage />, <IconFlash />],
    [<IconFile />, <IconPalette />],
    [<IconDown />, <IconIE w={14} />, <IconGrid />, <IconCode />, <IconFieldset />, <IconSmile />],
  ],
];

const tasks = [
  [<IconBrush />, "net", "办", "..."],
  [<IconSql />, "SQL ", "查", "..."],
  [<IconDw />, "Macrom...", "", ""],
  [<IconPageE />, "mk - M...", "", ""],
  [<IconHammer />, "SQL Se...", "", ""],
  [<IconChat w={13} />, "zyyzhe...", "", ""],
  [<IconFolder />, "net", "办", "..."],
  [<IconServer />, "Intern...", "", ""],
  [<IconFolder />, "60", "", ""],
  [<IconPageE />, "OA", "办公", "..."],
];

const Picker = ({ w, label }) => (
  <SelectBox $w={w}>
    <Select aria-label={label} defaultValue={label}><option>{label}</option></Select>
    <SelectArrow><Chevron /></SelectArrow>
  </SelectBox>
);

const SideGroup = ({ title, items }) => (
  <Group>
    <GroupHead>
      <span>{title}</span>
      <Toggle aria-label={`折叠${title}`}><Svg w={7} box="0 0 8 8"><path d="M1.500 4L4 1.500 6.500 4M1.500 7L4 4.500 6.500 7" stroke="#444" /></Svg></Toggle>
    </GroupHead>
    <GroupList>
      {items.map((t) => <li key={t}><MenuLink href="#">{t}</MenuLink></li>)}
    </GroupList>
  </Group>
);

export default function App() {
  return (
    <Page>
      <Global />
      <PlayerTitle>
        <IconPlayer w={17} />
        <span>SCREEN2EXE/SCREEN2SWF <PlayerName>播放器</PlayerName></span>
        <CaptionButtons>
          <CaptionPair>
            <Caption aria-label="最小化"><Svg w={12} h={6} box="0 0 12 6"><path d="M1.500 1.500h9v3h-9z" fill="#fff" stroke="#4c5868" /></Svg></Caption>
            <Caption $wide aria-label="最大化" />
          </CaptionPair>
          <Caption $close aria-label="关闭"><Svg w={12} h={10} box="0 0 12 10"><path d="M2.500 1.500l7 7m0-7l-7 7" stroke="#5a2c28" strokeWidth="4" /><path d="M2.500 1.500l7 7m0-7l-7 7" stroke="#fff" strokeWidth="2.400" /></Svg></Caption>
        </CaptionButtons>
      </PlayerTitle>
      <Bubble>50</Bubble>

      <Stage>
        <Desktop>
          <Watermark>屏幕录像专家{"  "}未注册</Watermark>
          <BrowserTitle>
            <IconPageE />
            <span>OA<b>办公自动化系统</b> - Microsoft Internet Explorer</span>
            <XpButtons>
              <XpButton aria-label="最小化"><Svg w={10} box="0 0 10 10"><path d="M1 8h5" stroke="#fff" strokeWidth="2.500" /></Svg></XpButton>
              <XpButton aria-label="还原"><Svg w={10} box="0 0 10 10"><path d="M3.500 3V1.500h5v5H7M1.500 3.500h5v5h-5z" stroke="#fff" /></Svg></XpButton>
              <XpButton $close aria-label="关闭"><Svg w={10} box="0 0 10 10"><path d="M1 1l8 8m0-8L1 9" stroke="#fff" strokeWidth="1.800" /></Svg></XpButton>
            </XpButtons>
          </BrowserTitle>
          <MenuBar>
            {menus.map(([t, k]) => <MenuItem key={t}>{t}<Latin>(<u>{k}</u>)</Latin></MenuItem>)}
            <FlagCell><IconFlag w={15} /></FlagCell>
          </MenuBar>
          <Toolbar>
            <Tool $after={9}><RoundArrow back fill="#3f9f34" edge="#2a7a24" />后退</Tool>
            <Tool $after={8} aria-label="后退列表"><Caret6 /></Tool>
            <Tool $after={6} aria-label="前进"><RoundArrow fill="#b8b8b2" edge="#94948e" /></Tool>
            <Tool $after={7} aria-label="前进列表"><Caret6 c="#b8b8ae" /></Tool>
            <Tool $after={7} aria-label="停止"><IconStop /></Tool>
            <Tool $after={6} aria-label="刷新"><IconRefresh /></Tool>
            <Tool $after={4} aria-label="主页"><IconHome /></Tool>
            <Divider />
            <Tool $after={8}><IconSearch />搜索</Tool>
            <Tool $after={9}><IconStar />收藏夹</Tool>
            <Tool $after={5} aria-label="历史"><IconHistory /></Tool>
            <Divider />
            <Tool $after={1} aria-label="邮件"><IconMail /></Tool>
            <Tool $after={6} aria-label="邮件列表"><Caret6 /></Tool>
            <Tool $after={10} aria-label="打印"><IconPrinter /></Tool>
            <Tool $after={8} aria-label="编辑"><IconWord /></Tool>
            <Tool $after={6} aria-label="编辑列表"><Caret6 /></Tool>
            <Tool $after={7} aria-label="讨论"><IconNote /></Tool>
            <Tool $after={6} aria-label="资料夹"><IconBookFold /></Tool>
            <Tool aria-label="信息检索"><IconBooks /></Tool>
          </Toolbar>
          <AddressBar>
            <AddressLabel htmlFor="address">地址<Latin>(<u>D</u>)</Latin></AddressLabel>
            <AddressField>
              <IconPageE />
              <AddressInput id="address" defaultValue="http://localhost/main.aspx" />
              <DropButton aria-label="地址列表"><Chevron /></DropButton>
            </AddressField>
            <GoButton><IconGo />转到</GoButton>
            <LinksLabel href="#">链接</LinksLabel>
          </AddressBar>

          <AppFrame>
            <AppHeader>
              <Brand>OA办公自动化系统</Brand>
              <HeaderRight>
                <Greeting>您好：<Latin>hsg</Latin>，您的权限：超级管理员<Latin>,</Latin>欢迎使用<Latin> OA</Latin>办公自动化系统<Latin>!  [</Latin><a href="#">注销退出</a><Latin>]</Latin></Greeting>
                <Tabs>
                  <Pager>
                    <Svg w={3} h={5} box="0 0 3 5"><path d="M3 0v5L0 2.500z" fill="#234" /></Svg>
                    <Svg w={10} box="0 0 10 10"><path d="M0 0h10v10H0z" fill="#1888b8" /><path d="M4 2h5M4 5h5M4 8h5" stroke="#5cd0d8" /></Svg>
                    <Svg w={3} h={5} box="0 0 3 5"><path d="M0 0v5l3-2.500z" fill="#234" /></Svg>
                  </Pager>
                  <Tab $active>系统用户管理</Tab>
                  <Tab>数据备份</Tab>
                  <Tab>后台主页</Tab>
                </Tabs>
              </HeaderRight>
            </AppHeader>
            <Body>
              <Side>
                <SideMenu>
                  {groups.map(([t, items]) => <SideGroup key={t} title={t} items={items} />)}
                </SideMenu>
                <Scroll $green>
                  <ScrollEnd $green aria-label="向上"><ArrowTip d="M0 4h7L3.500 0z" c="#f4fce8" /></ScrollEnd>
                  <ScrollThumb />
                  <ScrollRest $grow={126} />
                  <ScrollEnd $green aria-label="向下"><ArrowTip d="M0 0h7L3.500 4z" c="#f4fce8" /></ScrollEnd>
                </Scroll>
              </Side>
              <Main>
                <FormTable>
                  <tbody>
                    <tr><Banner colSpan={2} $h={18}>添加通告</Banner></tr>
                    <tr>
                      <LabelCell><label htmlFor="title">标题:</label></LabelCell>
                      <FieldCell><FieldLine><TextInput id="title" $w={307} defaultValue="erher" /><Required>*</Required></FieldLine></FieldCell>
                    </tr>
                    <tr>
                      <LabelCell $h={223}><label htmlFor="content">内容:</label></LabelCell>
                      <FieldCell $top>
                        <Editor>
                          <EditorBar>
                            <Selects>
                              <SelectRow><Picker w={67} label="段落格式" /><Picker w={76} label="特殊字体格式" /></SelectRow>
                              <SelectRow><Picker w={104} label="选择字体" /><Picker w={40} label="字号" /></SelectRow>
                            </Selects>
                            <IconRows>
                              {iconRows.map((row, r) => (
                                <IconRow key={r}>
                                  {row.map((set, g) => (
                                    <IconGroup key={g}>
                                      {set.map((icon, i) => <EditTool key={i} type="button">{icon}</EditTool>)}
                                    </IconGroup>
                                  ))}
                                </IconRow>
                              ))}
                            </IconRows>
                          </EditorBar>
                          <AreaWrap>
                            <EditArea id="content" />
                            <Caret />
                          </AreaWrap>
                          <EditorFoot>
                            <Svg w={190} h={12} box="0 0 190 12">
                              <defs>
                                <linearGradient id="shade"><stop offset="0" stopColor="#868886" /><stop offset=".4" stopColor="#8e908e" /><stop offset="1" stopColor="#d8dad8" /></linearGradient>
                                <filter id="soft"><feGaussianBlur stdDeviation="1" /></filter>
                              </defs>
                              <path d="M5 0h183L3 8z" fill="url(#shade)" filter="url(#soft)" />
                            </Svg>
                            <ViewTabs>
                              <ViewTab type="button">代码</ViewTab>
                              <ViewTab type="button" $active>编辑</ViewTab>
                              <ViewTab type="button">预览</ViewTab>
                            </ViewTabs>
                            <ZoomButtons>
                              <button type="button" aria-label="增高"><IconPlusMinus plus /></button>
                              <button type="button" aria-label="降低"><IconPlusMinus /></button>
                            </ZoomButtons>
                          </EditorFoot>
                        </Editor>
                      </FieldCell>
                    </tr>
                    <tr>
                      <LabelCell $h={26}><label htmlFor="kind">类别:</label></LabelCell>
                      <FieldCell><FieldLine><TextInput id="kind" $w={117} $size={10} $sans defaultValue="通告" /><Required>*</Required></FieldLine></FieldCell>
                    </tr>
                    <tr>
                      <LabelCell><label htmlFor="hits">点击率:</label></LabelCell>
                      <FieldCell><FieldLine><TextInput id="hits" $w={117} defaultValue="8" /><Required>*</Required></FieldLine></FieldCell>
                    </tr>
                    <tr>
                      <LabelCell $h={26} />
                      <FieldCell><Actions><FormButton type="button">添加</FormButton><FormButton type="reset">重置</FormButton></Actions></FieldCell>
                    </tr>
                    <tr><Banner colSpan={2} $h={19} /></tr>
                  </tbody>
                </FormTable>
              </Main>
              <Scroll>
                <ScrollEnd aria-label="向上"><ArrowTip d="M0 4h7L3.500 0z" c="#c8c8ba" /></ScrollEnd>
                <ScrollRest />
                <ScrollEnd aria-label="向下"><Chevron c="#c8c8ba" /></ScrollEnd>
              </Scroll>
            </Body>
          </AppFrame>
          <Pointer $x={379} $y={419}><ArrowCursor /></Pointer>

          <StatusBar>
            <IconPageE />
            <span>完毕</span>
            <Panes>
              {[1, 2, 3, 4, 5].map((n) => <Pane key={n} />)}
              <Pane $w={124}><IconNet />本地<Latin>Intranet</Latin></Pane>
            </Panes>
          </StatusBar>
          <XpBar>
            <StartXp><IconFlag w={15} />开始</StartXp>
            <QuickLaunch><IconIE /><IconOutlook /><IconDesk /><span>»</span></QuickLaunch>
            <Tasks>
              {tasks.map(([icon, a, b, c], i) => (
                <Task key={i} $active={i === tasks.length - 1}>{icon}<span>{a}<b>{b}</b>{c}</span></Task>
              ))}
            </Tasks>
            <Lang><IconKeyboard w={13} /></Lang>
            <TrayXp>
              <IconHide /><IconGem /><IconPenguin /><IconMonitors /><IconChat w={13} /><IconService /><IconShield />
              <ClockXp>18:17</ClockXp>
            </TrayXp>
          </XpBar>
        </Desktop>
      </Stage>

      <Controls>
        <ControlButton $edge aria-label="暂停"><Svg w={10} h={12} box="0 0 10 12"><path d="M1 1h3v10H1zM6 1h3v10H6z" fill="#000" /></Svg></ControlButton>
        <ControlButton $edge aria-label="静音"><Svg w={14}><circle cx="8" cy="8" r="6.500" stroke="#000" /><path d="M3 7h3l4-4v10L6 10H3z" fill="#666" /><path d="M13 2L3 14" stroke="#000" strokeWidth="1.500" /></Svg></ControlButton>
        <Seek type="range" aria-label="进度" min={0} max={247} defaultValue={21} />
        <TimeBox>0:20/4:07</TimeBox>
        <ControlButton aria-label="全屏"><Svg w={13}><path d="M4.500 4.500h7v7h-7z" stroke="#000" strokeWidth="1.500" /><path d="M1 4V2h3M12 2h3v2M1 12v2h3M12 14h3v-2" stroke="#000" strokeWidth="1.500" /></Svg></ControlButton>
        <ControlButton aria-label="信息"><Svg w={14}><circle cx="8" cy="8" r="6.500" stroke="#000" strokeWidth="1.500" /><path d="M8 3.500v2M6.500 7H8v5M6 12h4" stroke="#000" strokeWidth="1.800" /></Svg></ControlButton>
      </Controls>

      <WinBar>
        <Orb aria-label="开始"><OrbIcon /></Orb>
        <PinButton aria-label="资源管理器"><ExplorerIcon /></PinButton>
        <PinButton $active aria-label="播放器"><IconPlayer w={33} /></PinButton>
        <TrayWin>
          <TrayIcon $w={22} aria-label="输入法"><IconKeyboard c="#5c6470" fill="#d4dae2" w={16} /></TrayIcon>
          <TrayIcon $w={22} aria-label="帮助"><HelpIcon /></TrayIcon>
          <TrayIcon $w={22} aria-label="还原"><RestoreIcon /></TrayIcon>
          <TrayIcon $w={14} aria-label="显示隐藏的图标"><UpIcon /></TrayIcon>
          <TrayIcon $w={36} aria-label="录像"><CameraIcon /></TrayIcon>
          <TrayIcon $before={24} aria-label="通知"><BellIcon /></TrayIcon>
          <TrayIcon aria-label="电源"><PlugIcon /></TrayIcon>
          <TrayIcon aria-label="音量"><SpeakerIcon /></TrayIcon>
          <TrayIcon aria-label="操作中心"><ActionIcon /></TrayIcon>
          <TrayIcon aria-label="网络"><SignalIcon /></TrayIcon>
          <ClockWin>11:40<br />2019/6/17</ClockWin>
          <ShowDesktop aria-label="显示桌面" />
        </TrayWin>
      </WinBar>
      <Pointer $x={1361} $y={259}><ArrowCursor /></Pointer>
    </Page>
  );
}
